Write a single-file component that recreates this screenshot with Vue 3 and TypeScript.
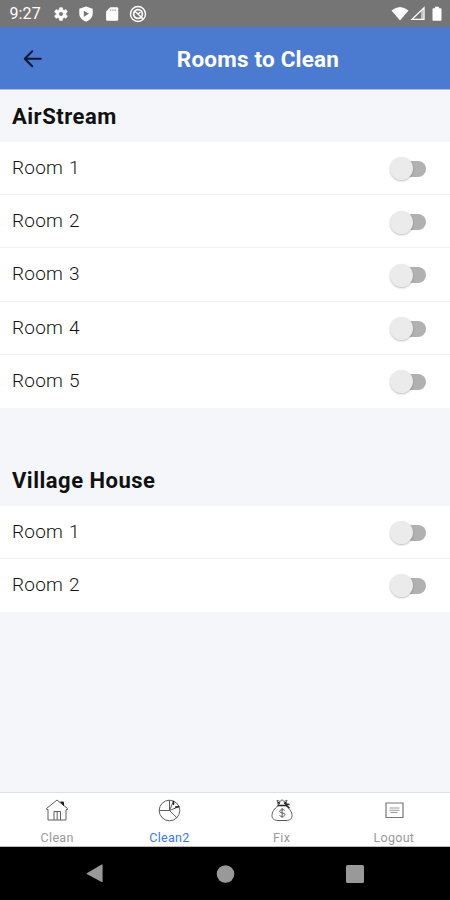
<script setup lang="ts">
import { ref } from 'vue'

interface Room { name: string; on: boolean }
interface Section { title: string; rooms: Room[] }

const makeRooms = (count: number): Room[] =>
  Array.from({ length: count }, (_, i) => ({ name: `Room ${i + 1}`, on: false }))

const sections = ref<Section[]>([
  { title: 'AirStream', rooms: makeRooms(5) },
  { title: 'Village House', rooms: makeRooms(2) },
])

const tabs = ['Clean', 'Clean2', 'Fix', 'Logout']
const activeTab = ref('Clean2')
</script>

<template>
  <div class="screen">
    <div class="status">
      <span class="time">9:27</span>
      <div class="status-left">
        <svg width="16" height="16" viewBox="0 0 16 16">
          <path fill="#fff" fill-rule="evenodd" stroke="#fff" stroke-width=".6" d="M6.600 .8h2.800l.4 2 1.200.7 2-.8 1.400 2.400-1.600 1.300v1.300l1.600 1.300-1.400 2.400-2-.7-1.200.7-.4 2.100H6.600l-.4-2.100-1.200-.7-2 .7L1.600 9l1.600-1.300V6.400L1.600 5.100 3 2.700l2 .8 1.200-.7zM8 4.800a2.300 2.300 0 1 0 0 4.600 2.300 2.300 0 0 0 0-4.600z" transform="translate(0 .9)" />
        </svg>
        <svg width="16" height="16" viewBox="0 0 16 16">
          <path fill="#fff" d="M8 .5l6.700 2.300v4.700c0 3.800-2.700 6.700-6.700 8.200-4-1.500-6.700-4.400-6.700-8.200V2.800z" />
          <path fill="#757575" d="M5.800 4.800L11 7.800 5.800 10.800z" />
        </svg>
        <svg width="16" height="16" viewBox="0 0 16 16">
          <path fill="#fff" d="M6.300 1.300H13q1.200 0 1.200 1.200v11q0 1.200-1.200 1.200H3.300q-1.200 0-1.200-1.200v-8z" />
          <path stroke="#8a8a8a" stroke-width=".9" d="M6.700 3.300v1.800M8.900 3.300v1.800M11.100 3.300v1.800" />
        </svg>
        <svg width="18" height="18" viewBox="0 0 18 18" fill="none" stroke="#fff">
          <circle cx="9" cy="9" r="7.500" stroke-width="1.400" />
          <circle cx="9" cy="9" r="4.400" stroke-width="1.700" />
          <path d="M5.700 6l6.700 6.200M9 9l2.500-2M12 12.500l2 1" stroke-width="1.500" />
        </svg>
      </div>
      <div class="status-right">
        <svg width="18" height="16" viewBox="0 0 18 16"><path fill="#fff" d="M.5 4.400Q9-2.600 17.500 4.400L9 14.500z" /></svg>
        <svg width="16" height="16" viewBox="0 0 16 16"><path fill="none" stroke="#fff" stroke-width="1.300" d="M14 1.800v11.500H2z" /><path fill="#fff" d="M11 5.200l2.500-2.500V13H11z" opacity=".55" /></svg>
        <svg width="10" height="16" viewBox="0 0 10 16"><path fill="#fff" d="M3 .7h4v1.600h1.600q.9 0 .9.900v10.500q0 1-.9 1H1.400q-.9 0-.9-1V3.200q0-.9.900-.9H3z" /></svg>
      </div>
    </div>

    <header class="header">
      <svg class="back" width="20" height="20" viewBox="0 0 20 20" fill="none" stroke="#0b1730" stroke-width="2" stroke-linecap="round" stroke-linejoin="round">
        <path d="M9.200 2.200L1.800 9.700l7.400 7.500M2.300 9.700h15.500" />
      </svg>
      <h1>Rooms to Clean</h1>
    </header>

    <main class="content">
      <section v-for="s in sections" :key="s.title" class="section">
        <h2>{{ s.title }}</h2>
        <div class="rooms">
          <div v-for="r in s.rooms" :key="r.name" class="row">
            <span class="label">{{ r.name }}</span>
            <button class="switch" :class="{ on: r.on }" :aria-label="r.name" @click="r.on = !r.on"><i /></button>
          </div>
        </div>
      </section>
    </main>

    <nav class="tabs">
      <button v-for="t in tabs" :key="t" class="tab" :class="{ active: activeTab === t }" @click="activeTab = t">
        <svg width="26" height="26" viewBox="0 0 26 26" fill="none" stroke="#5c5c5c" stroke-width="1">
          <template v-if="t === 'Clean'">
            <path d="M2.500 11.500L13 3l10.500 8.500v1l-1.500.2V23H4V12.500l-1.500-.2z" />
            <path d="M10 23v-8.500h6.500V23M13.200 15v8" />
            <path d="M16.500 5h3v3.500z" fill="#222" stroke="#222" />
          </template>
          <template v-else-if="t === 'Clean2'">
            <circle cx="13.500" cy="13.500" r="10.300" />
            <path d="M3.200 13.500H13.500l7.400 7.300M13.500 13.500V3.200M13.500 13.500l4-9.500M13.500 13.500l10-4" />
            <path d="M17.500 4v4M19 10.200l4-.7" stroke="#222" stroke-width="1.400" />
          </template>
          <template v-else-if="t === 'Fix'">
            <path d="M9.500 8.500C5 11.500 3 15.500 3 18.500 3 22 5.500 23.500 9 23.500h8c3.500 0 6-1.500 6-5 0-3-2-7-6.500-10z" />
            <path d="M9.500 8.500L8 3.200l3 1.300 2-1.800 2 1.800 3-1.300-1.500 5.300z" />
            <path d="M8.500 8.500h9l3 2.500M16.500 7l4 .5M9 5.500l2 1M17 5.500l-2 1" stroke="#222" stroke-width="1.400" />
            <path d="M15.700 13.400c-.6-1-5-1.300-5 .9 0 2.300 5.300 1 5.300 3.400 0 2.200-4.800 2.100-5.600.6M13.100 11v10" />
          </template>
          <template v-else>
            <path d="M5 6h17v14.500H5z" stroke="#777" stroke-width="1.200" />
            <path d="M8.500 11h10M8.500 13.300h10M9.500 15.500h7" stroke="#999" />
          </template>
        </svg>
        <span>{{ t }}</span>
      </button>
    </nav>

    <div class="sysnav">
      <svg width="18" height="20" viewBox="0 0 18 20"><path fill="#999" d="M.8 9.200L15.600.6q1-.4 1 .5v16.300q0 1-1 .5L.8 10.100q-.6-.4 0-.9z" /></svg>
      <svg width="20" height="20" viewBox="0 0 20 20"><circle cx="10.500" cy="10" r="8.800" fill="#999" /></svg>
      <svg width="20" height="20" viewBox="0 0 20 20"><rect x="1" y="1" width="18" height="18" rx="1.500" fill="#999" /></svg>
    </div>
  </div>
</template>

<style>
body { margin: 0; }
</style>

<style scoped>
.screen { width: 450px; height: 900px; display: flex; flex-direction: column; overflow: hidden; background: #f4f6fa; font-family: Roboto, "Liberation Sans", sans-serif; }
button { border: 0; padding: 0; background: none; font: inherit; }
svg { display: block; flex: none; }
.status { height: 27px; flex: none; box-sizing: border-box; display: flex; align-items: center; padding: 1px 8px 0 9.500px; background: #757575; }
.time { width: 42.500px; color: #fff; font-size: 16px; letter-spacing: .1px; line-height: 26px; }
.status-left { display: flex; align-items: center; gap: 9.300px; flex: 1; padding-left: 1px; }
.status-right { display: flex; align-items: center; gap: 1px; }
.status-right svg:last-child { margin-left: 5px; }
.header { height: 63px; flex: none; box-sizing: border-box; display: flex; align-items: center; padding: 1px 0 0 23px; background: #4b7ad1; border-bottom: 1px solid #a7bde8; }
h1 { flex: 1; margin: 0; padding: 0 0 0 23px; text-align: center; color: #fff; font-size: 22.500px; font-weight: 700; letter-spacing: .2px; line-height: 30px; }
.content { flex: 1; min-height: 0; }
h2 { margin: 0; height: 51.500px; padding-left: 12px; font-size: 22px; line-height: 54.500px; font-weight: 700; letter-spacing: .5px; color: #111; }
.section + .section { margin-top: 46.500px; }
.row { box-sizing: border-box; height: 53.350px; display: flex; align-items: center; justify-content: space-between; padding: 0 23px 0 12px; background: #fff; border-bottom: 1.500px solid #f1f2f4; }
.row:last-child { border-bottom-color: #fff; height: 52.700px; }
.label { font-size: 19px; font-weight: 300; letter-spacing: .25px; word-spacing: 1px; color: #111; line-height: 26px; }
.switch { width: 37px; height: 26px; display: flex; align-items: center; padding-top: 2px; }
.switch::after { content: ""; width: 24px; height: 16px; border-radius: 0 8px 8px 0; background: #b1b1b1; margin-left: -11px; }
.switch i { width: 23px; height: 23px; flex: none; border-radius: 50%; background: #ebebeb; box-shadow: 0 1px 2px rgba(0, 0, 0, .25); z-index: 1; }
.tabs { height: 55px; flex: none; box-sizing: border-box; display: grid; grid-template-columns: repeat(4, 1fr); padding-left: 1px; background: #fff; border-top: 1.500px solid #dedfe1; border-bottom: 1px solid #bbb; }
.tab { display: flex; flex-direction: column; align-items: center; padding-top: 4px; gap: 6.500px; color: #999; font-size: 12.500px; line-height: 16px; letter-spacing: .3px; }
.active { color: #3478f6; }
.sysnav { height: 53px; flex: none; display: flex; align-items: center; justify-content: space-between; padding: 1px 85px 0 86px; box-sizing: border-box; background: #000; }
</style>
